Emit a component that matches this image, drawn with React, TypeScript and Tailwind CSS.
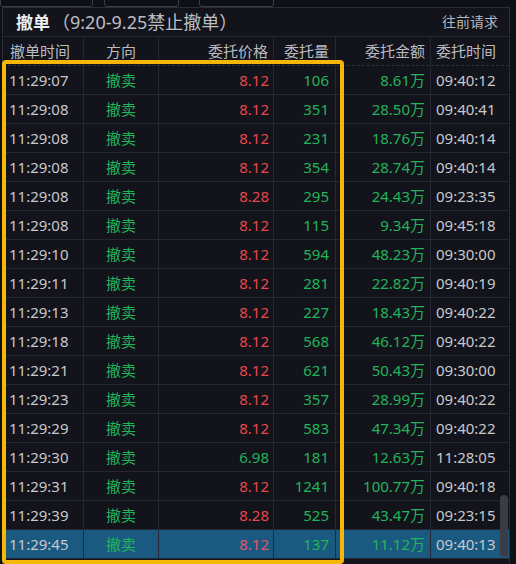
import React from "react";

type Row = { t: string; p: string; q: string; a: string; o: string; pc: "r" | "g" };

const rows: Row[] = [
  { t: "11:29:07", p: "8.12", q: "106", a: "8.61万", o: "09:40:12", pc: "r" },
  { t: "11:29:08", p: "8.12", q: "351", a: "28.50万", o: "09:40:41", pc: "r" },
  { t: "11:29:08", p: "8.12", q: "231", a: "18.76万", o: "09:40:14", pc: "r" },
  { t: "11:29:08", p: "8.12", q: "354", a: "28.74万", o: "09:40:14", pc: "r" },
  { t: "11:29:08", p: "8.28", q: "295", a: "24.43万", o: "09:23:35", pc: "r" },
  { t: "11:29:08", p: "8.12", q: "115", a: "9.34万", o: "09:45:18", pc: "r" },
  { t: "11:29:10", p: "8.12", q: "594", a: "48.23万", o: "09:30:00", pc: "r" },
  { t: "11:29:11", p: "8.12", q: "281", a: "22.82万", o: "09:40:19", pc: "r" },
  { t: "11:29:13", p: "8.12", q: "227", a: "18.43万", o: "09:40:22", pc: "r" },
  { t: "11:29:18", p: "8.12", q: "568", a: "46.12万", o: "09:40:22", pc: "r" },
  { t: "11:29:21", p: "8.12", q: "621", a: "50.43万", o: "09:30:00", pc: "r" },
  { t: "11:29:23", p: "8.12", q: "357", a: "28.99万", o: "09:40:22", pc: "r" },
  { t: "11:29:29", p: "8.12", q: "583", a: "47.34万", o: "09:40:22", pc: "r" },
  { t: "11:29:30", p: "6.98", q: "181", a: "12.63万", o: "11:28:05", pc: "g" },
  { t: "11:29:31", p: "8.12", q: "1241", a: "100.77万", o: "09:40:18", pc: "r" },
  { t: "11:29:39", p: "8.28", q: "525", a: "43.47万", o: "09:23:15", pc: "r" },
  { t: "11:29:45", p: "8.12", q: "137", a: "11.12万", o: "09:40:13", pc: "r" },
];

const font = { fontFamily: '"Noto Sans", "Noto Sans CJK SC", sans-serif' };

export default function App() {
  return (
    <div
      className="relative w-[516px] h-[564px] overflow-hidden bg-[#0f1016] text-[#c8c9cc]"
      style={font}
    >
      {/* top buttons edge */}
      <div className="flex h-[7px] items-end">
        <div className="w-[93px] h-[10px] border border-[#3a3c47] rounded-[3px] shrink-0" />
        <div className="w-[75px] h-[10px] border border-[#3a3c47] rounded-[3px] ml-[11px] shrink-0" />
        <div className="w-[75px] h-[10px] border border-[#3a3c47] rounded-[3px] ml-[20px] shrink-0" />
      </div>
      <div className="ml-[2px] w-[508px] h-[557px] border-l border-r border-t border-[#2a2c37] bg-[#12131b]">
        {/* title */}
        <div className="flex items-center h-[29px] border-b border-[#262934]">
          <span className="ml-[13px] text-[17px] font-bold text-[#eceef2] leading-none">撤单</span>
          <span className="ml-[2px] text-[18px] text-[#bcbec4] leading-none">（9:20-9.25禁止撤单）</span>
          <span className="ml-auto mr-[11px] text-[14px] text-[#b5b7bd] leading-none">往前请求</span>
        </div>
        {/* header */}
        <div className="flex h-[29px] items-center text-[15px] text-[#b9bbc1] border-b border-dashed border-[#2f323d]">
          <div className="w-[81px] h-full flex items-center pl-[7px] border-r border-[#262934]">撤单时间</div>
          <div className="w-[75px] h-full flex items-center justify-center border-r border-[#262934]">方向</div>
          <div className="w-[115px] h-full flex items-center justify-end pr-[5px] border-r border-[#262934]">委托价格</div>
          <div className="w-[62px] h-full flex items-center justify-end pr-[6px] border-r border-[#262934]">委托量</div>
          <div className="w-[95px] h-full flex items-center justify-end pr-[5px] border-r border-[#262934]">委托金额</div>
          <div className="flex-1 h-full flex items-center pl-[5px]">委托时间</div>
        </div>
        {rows.map((r, i) => {
          const last = i === rows.length - 1;
          return (
            <div
              key={i}
              className={`flex h-[29px] items-center text-[15px] border-b border-[#262934] ${
                last ? "bg-[#1a5a80]" : ""
              }`}
            >
              <div className="w-[81px] h-full flex items-center pl-[6px] border-r border-[#262934] text-[#c8c9cc]">{r.t}</div>
              <div className="w-[75px] h-full flex items-center justify-center border-r border-[#262934] text-[#22b45a]">撤卖</div>
              <div
                className={`w-[115px] h-full flex items-center justify-end pr-[4px] border-r border-[#262934] ${
                  r.pc === "r" ? (last ? "text-[#e0566a]" : "text-[#e8474a]") : "text-[#22b45a]"
                }`}
              >
                {r.p}
              </div>
              <div className="w-[62px] h-full flex items-center justify-end pr-[6px] border-r border-[#262934] text-[#22b45a]">{r.q}</div>
              <div className="w-[95px] h-full flex items-center justify-end pr-[5px] border-r border-[#262934] text-[#22b45a]">{r.a}</div>
              <div className="flex-1 h-full flex items-center pl-[5px] text-[#c8c9cc]">{r.o}</div>
            </div>
          );
        })}
      </div>
      {/* scrollbar */}
      <div className="absolute left-[500px] top-[495px] w-[8px] h-[62px] rounded-full bg-[#3a3d48]" />
      {/* orange annotation frame */}
      <div className="absolute left-[2px] top-[60px] w-[342px] h-[504px] border-4 border-[#f6b60a] rounded-[4px] pointer-events-none" />
    </div>
  );
}
